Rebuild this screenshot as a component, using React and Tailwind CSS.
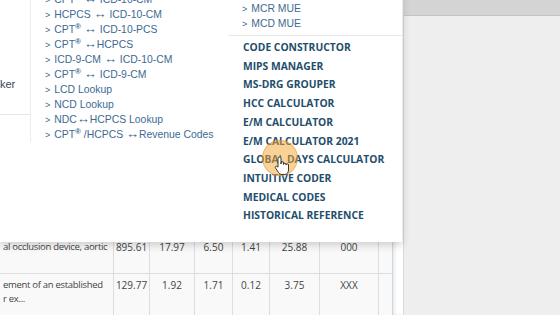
import React from "react";

const Reg = () => <sup className="text-[8px] font-bold">®</sup>;
const Ar = () => <span className="text-[13px] leading-[10px]">↔</span>;

const midLinks = [
    <>CPT<Reg /> <Ar /> ICD-10-CM</>,
    <>HCPCS <Ar /> ICD-10-CM</>,
    <>CPT<Reg /> <Ar /> ICD-10-PCS</>,
    <>CPT<Reg /> <Ar />HCPCS</>,
    <>ICD-9-CM <Ar /> ICD-10-CM</>,
    <>CPT<Reg /> <Ar /> ICD-9-CM</>,
    <>LCD Lookup</>,
    <>NCD Lookup</>,
    <>NDC<Ar />HCPCS Lookup</>,
    <>CPT<Reg /> /HCPCS <Ar />Revenue Codes</>,
];

const tools = [
    "CODE CONSTRUCTOR",
    "MIPS MANAGER",
    "MS-DRG GROUPER",
    "HCC CALCULATOR",
    "E/M CALCULATOR",
    "E/M CALCULATOR 2021",
    "GLOBAL DAYS CALCULATOR",
    "INTUITIVE CODER",
    "MEDICAL CODES",
    "HISTORICAL REFERENCE",
];

const colWidths = ["w-[36px]", "w-[45px]", "w-[38px]", "w-[37px]", "w-[50px]", "w-[59px]", "w-[14px]"];

const rows = [
    { desc: ["al occlusion device, aortic"], vals: ["895.61", "17.97", "6.50", "1.41", "25.88", "000", ""], h: "h-[38px]" },
    { desc: ["ement of an established", "r ex..."], vals: ["129.77", "1.92", "1.71", "0.12", "3.75", "XXX", ""], h: "h-[45px]" },
];

const LinkRow = ({ children }) => (
    <div className="flex items-center h-[15px] whitespace-nowrap">
        <span className="text-[9px] mr-[4px] text-[#3d6a91] translate-y-[1px]">&gt;</span>
        <span>{children}</span>
    </div>
);

const App = () => {
    return (
        <div className="relative w-[560px] h-[315px] overflow-hidden flex bg-[#eeeeee] font-['Liberation_Sans',Arial,sans-serif]">
            {/* page behind the menu */}
            <div className="w-[392px] shrink-0 bg-white flex flex-col font-['Open_Sans',sans-serif] text-[10px] text-[#444444]">
                <div className="h-[236px] shrink-0" />
                {rows.map((r, i) => (
                    <div key={i} className={`flex shrink-0 bg-[#f9f9f9] border-b border-[#dddddd] ${r.h}`}>
                        <div className="w-[113px] pl-[3px] pt-[4px] leading-[14px] text-[9.5px] tracking-[-0.3px] whitespace-nowrap overflow-hidden">
                            {r.desc.map((d) => (
                                <div key={d}>{d}</div>
                            ))}
                        </div>
                        {r.vals.map((v, j) => (
                            <div key={j} className={`${colWidths[j]} border-l border-[#dddddd] pt-[4px] leading-[14px] text-center`}>
                                {v}
                            </div>
                        ))}
                    </div>
                ))}
            </div>
            <div className="w-[11px] shrink-0 bg-white border-l border-[#cdd6df] shadow-[inset_2px_0_3px_rgba(110,130,150,0.15)]" />
            <div className="flex-1 flex flex-col border-l border-[#d9d9d9]">
                <div className="h-[16px] bg-[#d4d4d4] border-b border-[#c4c4c4]" />
                <div className="flex-1 bg-[#eeeeee]" />
            </div>

            {/* mega menu */}
            <div className="absolute left-0 top-[-8px] w-[402px] h-[250px] bg-white shadow-[0_3px_8px_rgba(0,0,0,0.18)] flex items-start">
                <div className="w-[30px] shrink-0">
                    <div className="h-[123px] pt-[85px] border-b border-[#e6e6e6] text-[11px] leading-[15px] text-[#34495e] whitespace-nowrap">
                        ker
                    </div>
                </div>
                <div className="w-[198px] shrink-0 border-l border-[#ececec] pl-[14px] text-[10.4px] text-[#3d6a91]">
                    {midLinks.map((l, i) => (
                        <LinkRow key={i}>{l}</LinkRow>
                    ))}
                </div>
                <div className="flex-1 flex flex-col">
                    <div className="pt-[9px] pb-[4px] pl-[14px] border-b border-[#e8e8e8] text-[10.4px] text-[#3d6a91]">
                        <LinkRow>MCR MUE</LinkRow>
                        <LinkRow>MCD MUE</LinkRow>
                    </div>
                    <div className="pt-[2px] pl-[15px] font-['Open_Sans',sans-serif] font-bold text-[10.3px] leading-[18.7px] text-[#1f4e6c] whitespace-nowrap">
                        {tools.map((t) => (
                            <div key={t}>{t}</div>
                        ))}
                    </div>
                </div>
            </div>

            {/* click highlight + cursor */}
            <div className="absolute left-[262px] top-[140px] w-[36px] h-[36px] rounded-full bg-[rgba(245,165,50,0.5)] border border-[rgba(230,150,40,0.45)]" />
            <svg className="absolute left-[274px] top-[156px]" width="16" height="20" viewBox="0 0 16 20">
                <path
                    d="M4 10V2.5a1.5 1.5 0 0 1 3 0V8V7a1.25 1.25 0 0 1 2.5 0V8.5a1.25 1.25 0 0 1 2.5 0V9a1.25 1.25 0 0 1 2.5 0V14c0 2.5-1.5 4.5-4 4.5H8c-1.7 0-2.6-.8-3.5-2L1.6 12.2a1.2 1.2 0 0 1 1.8-1.6L4 11.2Z"
                    fill="#ffffff"
                    stroke="#222222"
                    strokeWidth="0.9"
                    strokeLinejoin="round"
                />
            </svg>
        </div>
    );
};

export default App;
